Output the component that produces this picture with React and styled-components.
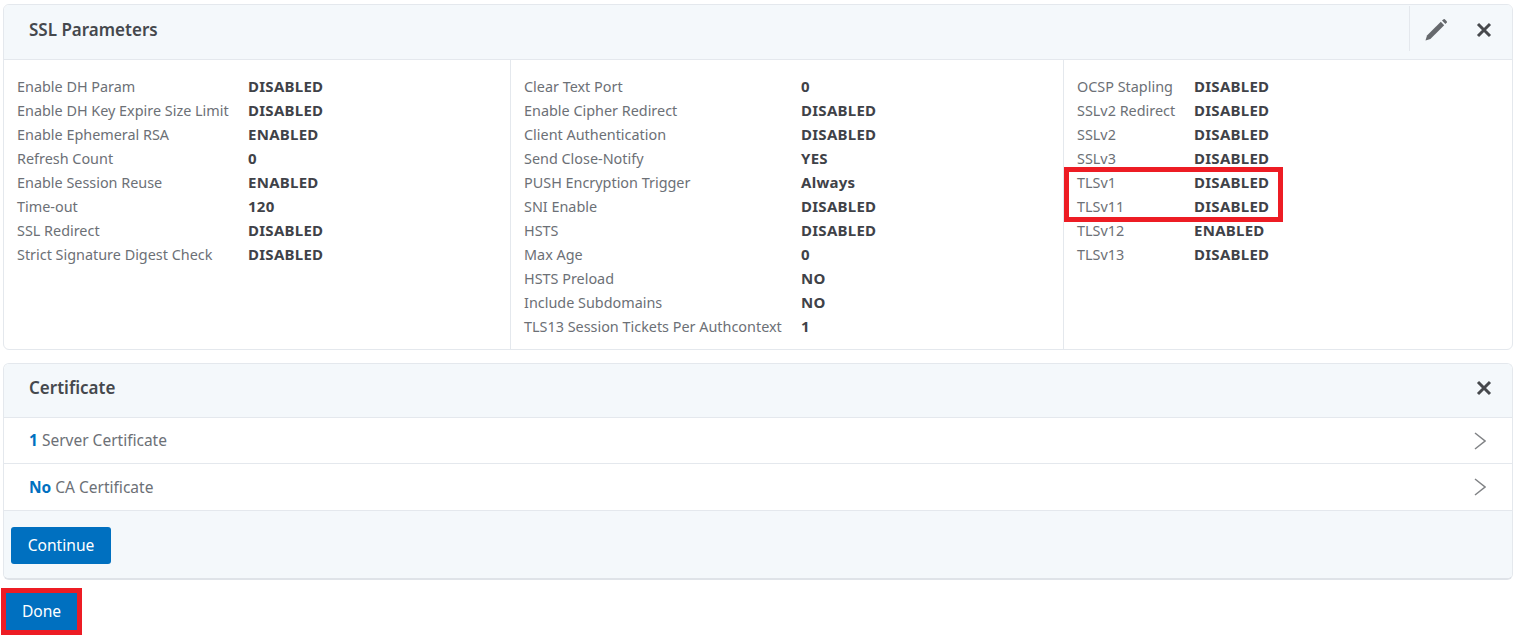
import React from "react"
import styled, { createGlobalStyle } from "styled-components"

const GlobalStyle = createGlobalStyle`
  html, body {
    margin: 0;
    padding: 0;
    background: #fff;
    font-family: "Noto Sans", "Open Sans", sans-serif;
    font-size: 14.4px;
    color: #6c7076;
  }
  * { box-sizing: border-box; }
`

const Page = styled.div`
  position: relative;
  width: 1517px;
  height: 635px;
  overflow: hidden;
  padding: 4px 4px 0 3px;
`

const Panel = styled.section`
  border: 1px solid #e4e8ed;
  border-radius: 6px;
  background: #fff;
  overflow: hidden;
  margin-bottom: 13px;
  ${(p) => p.$raised && "border-bottom: 2px solid #dfe3e8;"}
`

const PanelHeader = styled.header`
  display: flex;
  align-items: center;
  height: ${(p) => p.$height}px;
  padding: 0 5px ${(p) => p.$lift}px 25px;
  background: #f4f8fb;
  border-bottom: 1px solid #e4e8ed;
`

const PanelTitle = styled.h2`
  flex: 1;
  margin: 0;
  font-size: 17px;
  font-weight: 600;
  color: #45484d;
`

const ToolDivider = styled.span`
  align-self: flex-start;
  width: 1px;
  height: 45px;
  margin: 1px 1px 0 0;
  background: #e4e8ed;
`

const IconButton = styled.button`
  display: flex;
  align-items: center;
  justify-content: center;
  width: ${(p) => p.$width}px;
  height: 40px;
  padding: 0;
  border: 0;
  background: none;
  color: #4b4e52;
`

const ParamBody = styled.div`
  display: grid;
  grid-template-columns: 506px 553px 1fr;
  height: 289px;
`

const ParamColumn = styled.div`
  display: grid;
  grid-template-columns: ${(p) => p.$labelWidth}px 1fr;
  grid-auto-rows: 24px;
  align-content: start;
  padding: 15px 0 0 13px;
  border-left: ${(p) => (p.$first ? "0" : "1px solid #e4e8ed")};
`

const Label = styled.div`
  line-height: 24px;
  white-space: nowrap;
`

const Value = styled.div`
  line-height: 22px;
  font-size: 15px;
  letter-spacing: 0.27px;
  font-weight: 700;
  color: #3f4248;
  white-space: nowrap;
`

const LinkRow = styled.div`
  display: flex;
  align-items: center;
  justify-content: space-between;
  height: ${(p) => p.$height}px;
  padding: 0 26px 0 25px;
  border-bottom: 1px solid #e4e8ed;
  font-size: 15.5px;
`

const RowText = styled.span`
  margin-top: -1px;
`

const Count = styled.b`
  font-weight: 700;
  color: #0070c0;
`

const PanelFooter = styled.footer`
  height: 67px;
  padding: 16px 0 0 7px;
  background: #f4f8fb;
`

const Button = styled.button`
  width: 100px;
  height: 37px;
  padding: 0 0 2px;
  border: 0;
  border-radius: 3px;
  background: #0070c0;
  color: #fff;
  font-family: inherit;
  font-size: 15.6px;
`

const DoneButton = styled(Button)`
  display: block;
  width: 81px;
  height: 47px;
  margin: -5px 0 0 -2px;
  border: 5px solid #ed1c24;
  border-radius: 0;
`

const Highlight = styled.div`
  position: absolute;
  left: 1064px;
  top: 167px;
  width: 219px;
  height: 55px;
  border: 5px solid #ed1c24;
`

const PencilIcon = () => (
  <svg width="24" height="24" viewBox="0 0 24 24" fill="#66696d">
    <path d="M1.5 22.5 L3 17.6 L16.8 3.8 L20.2 7.2 L6.4 21 Z" />
    <path d="M18 2.6 L19.6 1.2 Q20.2 0.8 20.8 1.3 L22.7 3.2 Q23.2 3.8 22.8 4.4 L21.4 6 Z" />
  </svg>
)

const CloseIcon = () => (
  <svg width="16" height="16" viewBox="0 0 16 16" fill="none" stroke="#47494d" strokeWidth="3">
    <path d="M2 2 L14 14 M14 2 L2 14" />
  </svg>
)

const ChevronIcon = () => (
  <svg width="12" height="18" viewBox="0 0 12 18" fill="none" stroke="#818386" strokeWidth="1.5">
    <path d="M1 1 L11 9 L1 17" />
  </svg>
)

const columns = [
  {
    labelWidth: 231,
    rows: [
      ["Enable DH Param", "DISABLED"],
      ["Enable DH Key Expire Size Limit", "DISABLED"],
      ["Enable Ephemeral RSA", "ENABLED"],
      ["Refresh Count", "0"],
      ["Enable Session Reuse", "ENABLED"],
      ["Time-out", "120"],
      ["SSL Redirect", "DISABLED"],
      ["Strict Signature Digest Check", "DISABLED"],
    ],
  },
  {
    labelWidth: 277,
    rows: [
      ["Clear Text Port", "0"],
      ["Enable Cipher Redirect", "DISABLED"],
      ["Client Authentication", "DISABLED"],
      ["Send Close-Notify", "YES"],
      ["PUSH Encryption Trigger", "Always"],
      ["SNI Enable", "DISABLED"],
      ["HSTS", "DISABLED"],
      ["Max Age", "0"],
      ["HSTS Preload", "NO"],
      ["Include Subdomains", "NO"],
      ["TLS13 Session Tickets Per Authcontext", "1"],
    ],
  },
  {
    labelWidth: 117,
    rows: [
      ["OCSP Stapling", "DISABLED"],
      ["SSLv2 Redirect", "DISABLED"],
      ["SSLv2", "DISABLED"],
      ["SSLv3", "DISABLED"],
      ["TLSv1", "DISABLED"],
      ["TLSv11", "DISABLED"],
      ["TLSv12", "ENABLED"],
      ["TLSv13", "DISABLED"],
    ],
  },
]

export default function App() {
  return (
    <Page>
      <GlobalStyle />
      <Panel>
        <PanelHeader $height={55} $lift={5}>
          <PanelTitle>SSL Parameters</PanelTitle>
          <ToolDivider />
          <IconButton $width={50}>
            <PencilIcon />
          </IconButton>
          <IconButton $width={46}>
            <CloseIcon />
          </IconButton>
        </PanelHeader>
        <ParamBody>
          {columns.map((col, i) => (
            <ParamColumn key={i} $first={i === 0} $labelWidth={col.labelWidth}>
              {col.rows.map(([label, value]) => (
                <React.Fragment key={label}>
                  <Label>{label}</Label>
                  <Value>{value}</Value>
                </React.Fragment>
              ))}
            </ParamColumn>
          ))}
        </ParamBody>
      </Panel>
      <Panel $raised>
        <PanelHeader $height={54} $lift={6}>
          <PanelTitle>Certificate</PanelTitle>
          <IconButton $width={46}>
            <CloseIcon />
          </IconButton>
        </PanelHeader>
        <LinkRow $height={46}>
          <RowText>
            <Count>1</Count> Server Certificate
          </RowText>
          <ChevronIcon />
        </LinkRow>
        <LinkRow $height={47}>
          <RowText>
            <Count>No</Count> CA Certificate
          </RowText>
          <ChevronIcon />
        </LinkRow>
        <PanelFooter>
          <Button>Continue</Button>
        </PanelFooter>
      </Panel>
      <DoneButton>Done</DoneButton>
      <Highlight />
    </Page>
  )
}
